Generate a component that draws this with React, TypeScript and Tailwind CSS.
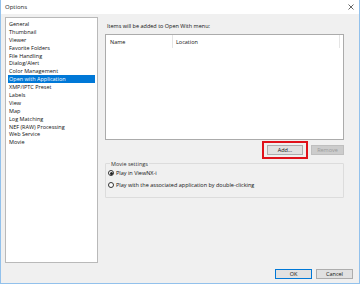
import React from 'react';

const categories = [
  'General',
  'Thumbnail',
  'Viewer',
  'Favorite Folders',
  'File Handling',
  'Dialog/Alert',
  'Color Management',
  'Open with Application',
  'XMP/IPTC Preset',
  'Labels',
  'View',
  'Map',
  'Log Matching',
  'NEF (RAW) Processing',
  'Web Service',
  'Movie',
];

function Radio({ checked, label }: { checked?: boolean; label: string }) {
  return (
    <div className="flex items-center gap-[2px] h-[12px]">
      <span className="w-[6px] h-[6px] rounded-full border border-[#333] bg-white flex items-center justify-center">
        {checked && <span className="w-[3px] h-[3px] rounded-full bg-[#222]" />}
      </span>
      <span>{label}</span>
    </div>
  );
}

export default function App() {
  return (
    <div
      className="w-[360px] h-[284px] flex flex-col border-x border-b border-[#92c1ec] text-[5.5px] text-[#111] leading-[8px]"
      style={{ fontFamily: '"Open Sans", "Noto Sans", sans-serif' }}
    >
      <div className="h-[14px] bg-white flex items-center justify-between pl-[4px] pr-[4px] shrink-0">
        <span className="text-[6px] text-[#222]">Options</span>
        <svg width="6" height="6" viewBox="0 0 6 6" className="mr-[1px]">
          <path d="M0.5 0.5 L5.5 5.5 M5.5 0.5 L0.5 5.5" stroke="#555" strokeWidth="0.9" />
        </svg>
      </div>

      <div className="flex-1 bg-[#f0f0f0] flex flex-col">
        <div className="flex pt-[3px] pl-[4px] gap-[7px]">
          <div className="w-[93px] h-[246px] bg-white border border-[#b9b9b9] pt-[2px] px-[2px]">
            {categories.map((c) => (
              <div
                key={c}
                className={
                  c === 'Open with Application'
                    ? 'h-[7.9px] pl-[1px] bg-[#0078d7] text-white'
                    : 'h-[7.9px] pl-[1px]'
                }
              >
                {c}
              </div>
            ))}
          </div>

          <div className="w-[239px] flex flex-col">
            <div className="pt-[5px] pl-[2px] h-[17px]">Items will be added to Open With menu:</div>
            <div className="h-[106px] bg-white border border-[#ababab] flex flex-col">
              <div className="flex h-[13px] items-center">
                <div className="w-[67px] pl-[4px] h-full flex items-center border-r border-[#e5e5e5]">Name</div>
                <div className="w-[167px] pl-[3px] h-full flex items-center border-r border-[#e5e5e5]">Location</div>
              </div>
            </div>

            <div className="flex justify-end items-center mt-[1px] gap-[3px]">
              <div className="border-2 border-[#e0121b] p-[2px] pr-[3px] pl-[3px]">
                <div className="w-[36px] h-[10px] bg-[#e1e1e1] border border-[#adadad] flex items-center justify-center">
                  Add...
                </div>
              </div>
              <div className="w-[33px] h-[10px] bg-[#cccccc] border border-[#bfbfbf] flex items-center justify-center text-[#9a9a9a]">
                Remove
              </div>
            </div>

            <div className="mt-[4px] h-[35px] border border-[#dcdcdc] rounded-[1px] relative pt-[3px] pl-[2px]">
              <span className="absolute -top-[4px] left-[4px] bg-[#f0f0f0] px-[1px] text-[#333]">Movie settings</span>
              <Radio checked label="Play in ViewNX-i" />
              <Radio label="Play with the associated application by double-clicking" />
            </div>
          </div>
        </div>

        <div className="flex justify-end gap-[4px] pr-[6px] mt-[6px]">
          <div className="w-[37px] h-[10px] bg-[#e1e1e1] border border-[#0078d7] flex items-center justify-center">OK</div>
          <div className="w-[37px] h-[10px] bg-[#e1e1e1] border border-[#adadad] flex items-center justify-center">Cancel</div>
        </div>
      </div>
    </div>
  );
}
